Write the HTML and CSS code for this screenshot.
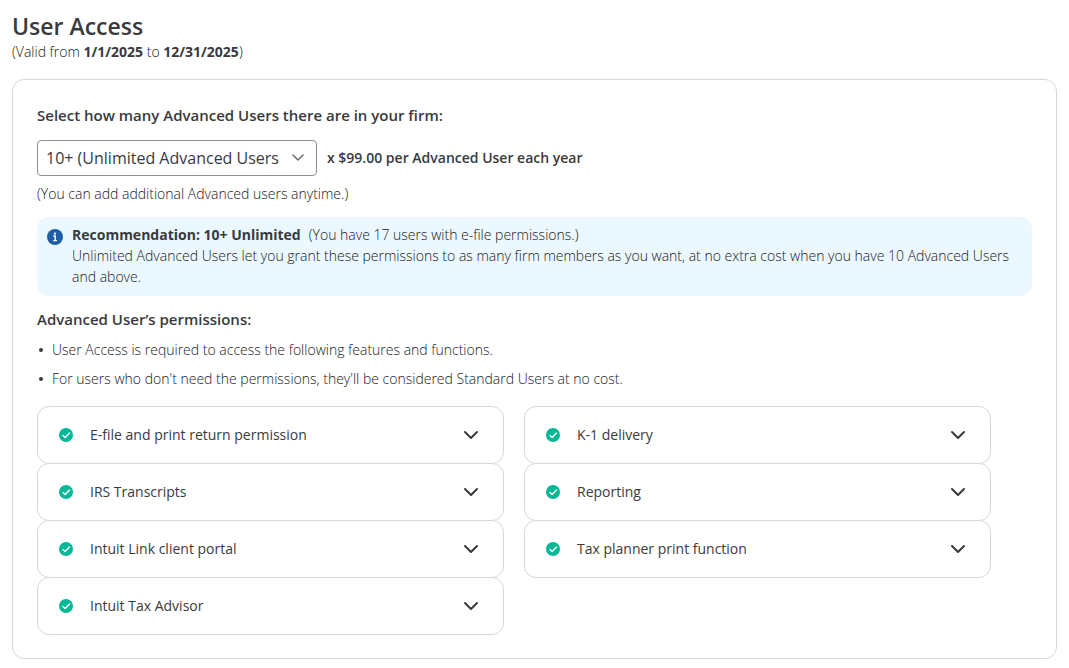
FILE: index.html
```html
<!DOCTYPE html>
<html lang="en">
<head>
<meta charset="utf-8">
<meta name="viewport" content="width=device-width, initial-scale=1">
<title>User Access</title>
<link rel="stylesheet" href="styles.css">
</head>
<body>
<svg class="symbols" aria-hidden="true">
  <symbol id="check" viewBox="0 0 14 14"><circle cx="7" cy="7" r="7" fill="#00b896"/><path d="M4 7.4 6.1 9.5 10.5 4.9" fill="none" stroke="#fff" stroke-width="1.4" stroke-linecap="round" stroke-linejoin="round"/></symbol>
  <symbol id="chevron" viewBox="0 0 16 10"><path d="M2 2 8 8 14 2" fill="none" stroke="currentColor" stroke-width="2" stroke-linecap="round" stroke-linejoin="round"/></symbol>
</svg>
<main class="page">
  <header class="page-header">
    <h1 class="title">User Access</h1>
    <p class="validity">(Valid from <strong>1/1/2025</strong> to <strong>12/31/2025</strong>)</p>
  </header>
  <section class="card">
    <label class="heading" for="user-count">Select how many Advanced Users there are in your firm:</label>
    <div class="picker">
      <div class="select-wrap">
        <select class="select" id="user-count"><option>10+ (Unlimited Advanced Users</option></select>
        <svg class="select-arrow" viewBox="0 0 14 8" aria-hidden="true"><path d="M2 1 7 6 12 1" fill="none" stroke="currentColor" stroke-width="1.5" stroke-linecap="round" stroke-linejoin="round"/></svg>
      </div>
      <span class="price">x $99.00 per Advanced User each year</span>
    </div>
    <p class="hint">(You can add additional Advanced users anytime.)</p>
    <div class="notice">
      <svg class="notice-icon" viewBox="0 0 16 16" aria-hidden="true"><circle cx="8" cy="8" r="8" fill="#205ea3"/><circle cx="8" cy="4.6" r="1.1" fill="#fff"/><path d="M6.3 7h1.9v4.3M6.2 11.6h3.7" fill="none" stroke="#fff" stroke-width="1.4"/></svg>
      <div class="notice-body">
        <p class="notice-line"><strong class="notice-title">Recommendation: 10+ Unlimited</strong><span>(You have 17 users with e-file permissions.)</span></p>
        <p class="notice-text">Unlimited Advanced Users let you grant these permissions to as many firm members as you want, at no extra cost when you have 10 Advanced Users and above.</p>
      </div>
    </div>
    <h2 class="heading">Advanced User’s permissions:</h2>
    <ul class="facts">
      <li class="fact">User Access is required to access the following features and functions.</li>
      <li class="fact">For users who don't need the permissions, they'll be considered Standard Users at no cost.</li>
    </ul>
    <div class="columns">
      <div class="column">
        <button class="row" type="button" aria-expanded="false"><svg class="check" aria-hidden="true"><use href="#check"/></svg><span class="row-label">E-file and print return permission</span><svg class="chevron" aria-hidden="true"><use href="#chevron"/></svg></button>
        <button class="row" type="button" aria-expanded="false"><svg class="check" aria-hidden="true"><use href="#check"/></svg><span class="row-label">IRS Transcripts</span><svg class="chevron" aria-hidden="true"><use href="#chevron"/></svg></button>
        <button class="row" type="button" aria-expanded="false"><svg class="check" aria-hidden="true"><use href="#check"/></svg><span class="row-label">Intuit Link client portal</span><svg class="chevron" aria-hidden="true"><use href="#chevron"/></svg></button>
        <button class="row" type="button" aria-expanded="false"><svg class="check" aria-hidden="true"><use href="#check"/></svg><span class="row-label">Intuit Tax Advisor</span><svg class="chevron" aria-hidden="true"><use href="#chevron"/></svg></button>
      </div>
      <div class="column">
        <button class="row" type="button" aria-expanded="false"><svg class="check" aria-hidden="true"><use href="#check"/></svg><span class="row-label">K-1 delivery</span><svg class="chevron" aria-hidden="true"><use href="#chevron"/></svg></button>
        <button class="row" type="button" aria-expanded="false"><svg class="check" aria-hidden="true"><use href="#check"/></svg><span class="row-label">Reporting</span><svg class="chevron" aria-hidden="true"><use href="#chevron"/></svg></button>
        <button class="row" type="button" aria-expanded="false"><svg class="check" aria-hidden="true"><use href="#check"/></svg><span class="row-label">Tax planner print function</span><svg class="chevron" aria-hidden="true"><use href="#chevron"/></svg></button>
      </div>
    </div>
  </section>
</main>
</body>
</html>
```

FILE: styles.css
```css
* { box-sizing: border-box; }
body {
  margin: 0;
  background: #fff;
  color: #393a3d;
  font-family: "Open Sans", "Noto Sans", sans-serif;
  font-size: 14px;
  font-weight: 300;
  line-height: 21px;
}
h1, h2, p, ul { margin: 0; }
strong { font-weight: 700; color: #393a3d; }
.symbols { display: none; }
.page { padding: 11px 12px 9px; }
.title { font-size: 23px; line-height: 30px; font-weight: 600; }
.validity, .hint, .notice, .fact { color: #17181a; }
.card {
  margin-top: 17px;
  padding: 23px 24px;
  border: 1px solid #d4d7dc;
  border-radius: 12px;
}
.heading { display: block; font-size: 15px; line-height: 24px; font-weight: 600; }
.picker { display: flex; align-items: center; gap: 10px; margin-top: 13px; }
.select-wrap { position: relative; width: 280px; }
.select {
  display: block;
  width: 100%;
  height: 36px;
  padding: 0 36px 0 8px;
  appearance: none;
  border: 1px solid #8d9096;
  border-radius: 4px;
  background: #fff;
  color: inherit;
  font: inherit;
  font-size: 16px;
  font-weight: 400;
}
.select-arrow {
  position: absolute;
  top: 14px;
  right: 12px;
  width: 14px;
  height: 8px;
  color: #6b6c72;
  pointer-events: none;
}
.price { padding-bottom: 2px; font-weight: 600; }
.hint { margin-top: 7px; }
.notice {
  display: flex;
  gap: 9px;
  margin-top: 13px;
  padding: 7px 10px 9px;
  border-radius: 12px;
  background: #ebf8ff;
}
.notice-icon { flex: none; width: 16px; height: 16px; margin-top: 5px; }
.notice-title { margin-right: 8px; }
.notice + .heading { margin-top: 11px; }
.facts { display: grid; gap: 8px; margin-top: 8px; padding: 0 0 0 2px; list-style: none; }
.fact { display: flex; align-items: center; gap: 9px; }
.fact::before {
  content: "";
  flex: none;
  width: 4px;
  height: 4px;
  border-radius: 50%;
  background: #393a3d;
}
.columns {
  display: grid;
  grid-template-columns: 1fr 1fr;
  gap: 20px;
  margin: 17px 41px 0 0;
}
.row {
  display: flex;
  align-items: center;
  width: 100%;
  height: 58px;
  padding: 0 24px 0 21px;
  border: 1px solid #d4d7dc;
  border-radius: 12px;
  background: #fff;
  color: inherit;
  font: inherit;
  font-weight: 400;
  text-align: left;
}
.row + .row { margin-top: -1px; }
.check { flex: none; width: 14px; height: 14px; }
.row-label { flex: 1; margin-left: 17px; padding-bottom: 2px; }
.chevron { flex: none; width: 16px; height: 10px; }
```
